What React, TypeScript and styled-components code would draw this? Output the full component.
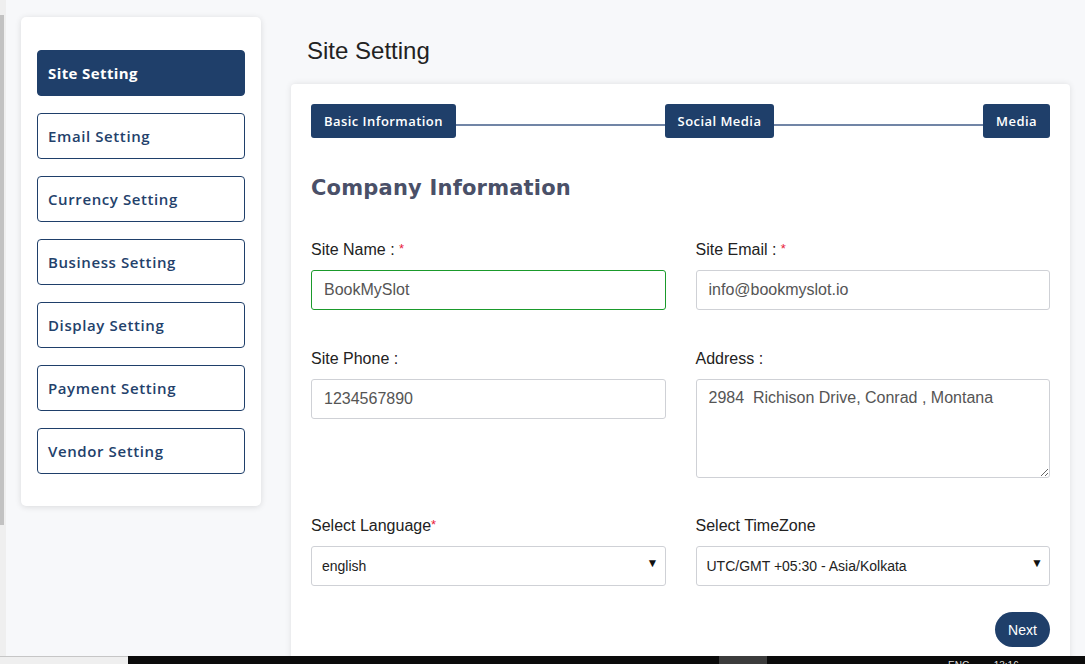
import React from "react";
import styled, { createGlobalStyle } from "styled-components";

const Global = createGlobalStyle`
  html, body { margin: 0; padding: 0; background: #f7f8fa; }
  body { font-family: "Liberation Sans", Arial, sans-serif; }
  * { box-sizing: border-box; }
`;

const NAVY = "#1f3f6a";

const Screen = styled.div`
  width: 1085px;
  height: 664px;
  display: flex;
  flex-direction: column;
  overflow: hidden;
`;

const Body = styled.div`
  height: 656px;
  display: flex;
  overflow: hidden;
`;

const EdgeStrip = styled.div`
  width: 6px;
  flex: none;
  background: #efefef;
  padding-top: 15px;
  display: flex;
  flex-direction: column;
`;

const EdgeThumb = styled.div`
  width: 4px;
  height: 510px;
  background: #c2c2c2;
`;

const Page = styled.div`
  flex: 1;
  display: flex;
  align-items: flex-start;
  gap: 30px;
  padding: 17px 15px 0 15px;
  background: #f7f8fa;
`;

const SideCard = styled.nav`
  width: 240px;
  flex: none;
  background: #fff;
  border-radius: 5px;
  box-shadow: 0 1px 6px rgba(0, 0, 0, 0.12);
  padding: 33px 16px 32px 16px;
  display: flex;
  flex-direction: column;
  gap: 17px;
`;

const SideItem = styled.div<{ $active?: boolean }>`
  height: 46px;
  border-radius: 4px;
  border: 1px solid ${NAVY};
  background: ${(p) => (p.$active ? NAVY : "#fff")};
  color: ${(p) => (p.$active ? "#fff" : "#23416b")};
  font-family: "Open Sans", sans-serif;
  font-weight: ${(p) => (p.$active ? 700 : 600)};
  font-size: 15px;
  letter-spacing: ${(p) => (p.$active ? "0.4px" : "0.6px")};
  display: flex;
  align-items: center;
  padding-left: 10px;
  padding-bottom: 1px;
`;

const Main = styled.main`
  flex: 1;
  display: flex;
  flex-direction: column;
`;

const Title = styled.h1`
  margin: 19px 0 0 16px;
  height: 48px;
  font-family: "Liberation Sans", Arial, sans-serif;
  font-weight: 400;
  font-size: 24px;
  line-height: 30px;
  color: #222;
`;

const Card = styled.section`
  background: #fff;
  border-radius: 4px;
  box-shadow: 0 0 6px rgba(0, 0, 0, 0.1);
  padding: 20px 20px 30px 20px;
`;

const Stepper = styled.div`
  display: flex;
  align-items: center;
`;

const Step = styled.div`
  height: 34px;
  padding: 0 13px;
  background: ${NAVY};
  color: #fff;
  border-radius: 3px;
  display: flex;
  align-items: center;
  font-family: "Open Sans", sans-serif;
  font-weight: 600;
  font-size: 13px;
  letter-spacing: 0.45px;
  flex: none;
`;

const StepLine = styled.div`
  flex: 1;
  height: 2px;
  background: #7185a6;
  margin-top: 8px;
`;

const Heading = styled.h2`
  margin: 37px 0 38px 0;
  font-family: "DejaVu Sans", "Liberation Sans", sans-serif;
  font-weight: 700;
  font-size: 21px;
  line-height: 26px;
  letter-spacing: 0.2px;
  color: #4a5068;
`;

const FormGrid = styled.div`
  display: grid;
  grid-template-columns: 1fr 1fr;
  column-gap: 30px;
  row-gap: 37.5px;
  align-items: start;
`;

const Field = styled.div`
  display: flex;
  flex-direction: column;
`;

const Label = styled.label`
  height: 21px;
  font-size: 16px;
  line-height: 22px;
  color: #222;
  margin-bottom: 10px;
`;

const Req = styled.span`
  color: #e8203a;
  font-size: 13px;
  line-height: 0;
  vertical-align: 2px;
`;

const Input = styled.input<{ $valid?: boolean; $spell?: boolean }>`
  height: 40px;
  width: 100%;
  border: 1px solid ${(p) => (p.$valid ? "#1a9a2b" : "#cfd1d6")};
  border-radius: 3px;
  padding: 0 12px;
  font-family: "Liberation Sans", Arial, sans-serif;
  font-size: 16px;
  color: #555;
  outline: none;
  background: #fff;
  ${(p) =>
    p.$spell
      ? "text-decoration: underline wavy #e0101a; text-decoration-thickness: 1px; text-underline-offset: 4px;"
      : ""}
`;

const TextArea = styled.textarea`
  height: 99px;
  width: 100%;
  border: 1px solid #cfd1d6;
  border-radius: 3px;
  padding: 8px 12px;
  font-family: "Liberation Sans", Arial, sans-serif;
  font-size: 16px;
  line-height: 20px;
  color: #555;
  outline: none;
`;

const SelectWrap = styled.div`
  position: relative;
`;

const Select = styled.select`
  appearance: none;
  height: 40px;
  width: 100%;
  border: 1px solid #cfd1d6;
  border-radius: 3px;
  padding: 0 10px;
  font-family: "Liberation Sans", Arial, sans-serif;
  font-size: 14px;
  color: #222;
  background: #fff;
  outline: none;
`;

const Caret = styled.span`
  position: absolute;
  right: 7px;
  top: 10px;
  font-size: 12px;
  line-height: 14px;
  color: #111;
  pointer-events: none;
`;

const Actions = styled.div`
  display: flex;
  justify-content: flex-end;
  margin-top: 26px;
`;

const NextButton = styled.button`
  width: 55px;
  height: 35px;
  border: none;
  border-radius: 18px;
  background: ${NAVY};
  color: #fff;
  font-family: "Liberation Sans", Arial, sans-serif;
  font-size: 14px;
  padding: 0;
`;

const TaskBar = styled.div`
  height: 8px;
  display: flex;
  overflow: hidden;
`;

const TaskLeft = styled.div`
  width: 128px;
  background: #efefef;
  border-top: 1px solid #c6c6c6;
`;

const TaskDark = styled.div`
  flex: 1;
  background: #0b0b0b;
  display: flex;
  align-items: flex-start;
`;

const TaskBlock = styled.div<{ $w: number; $ml: number }>`
  width: ${(p) => p.$w}px;
  margin-left: ${(p) => p.$ml}px;
  height: 8px;
  background: #3c3c3c;
`;

const TrayText = styled.span<{ $ml: number }>`
  margin-left: ${(p) => p.$ml}px;
  color: #ddd;
  font-family: "Liberation Sans", Arial, sans-serif;
  font-size: 10px;
  line-height: 10px;
  padding-top: 5px;
  white-space: nowrap;
`;

const menu = [
  "Site Setting",
  "Email Setting",
  "Currency Setting",
  "Business Setting",
  "Display Setting",
  "Payment Setting",
  "Vendor Setting",
];

export default function App() {
  return (
    <Screen>
      <Global />
      <Body>
        <EdgeStrip>
          <EdgeThumb />
        </EdgeStrip>
        <Page>
          <SideCard>
            {menu.map((m, i) => (
              <SideItem key={m} $active={i === 0}>
                {m}
              </SideItem>
            ))}
          </SideCard>
          <Main>
            <Title>Site Setting</Title>
            <Card>
              <Stepper>
                <Step>Basic Information</Step>
                <StepLine />
                <Step>Social Media</Step>
                <StepLine />
                <Step>Media</Step>
              </Stepper>
              <Heading>Company Information</Heading>
              <FormGrid>
                <Field>
                  <Label>
                    Site Name : <Req>*</Req>
                  </Label>
                  <Input $valid $spell defaultValue="BookMySlot" spellCheck={false} />
                </Field>
                <Field>
                  <Label>
                    Site Email : <Req>*</Req>
                  </Label>
                  <Input defaultValue="info@bookmyslot.io" />
                </Field>
                <Field>
                  <Label>Site Phone :</Label>
                  <Input defaultValue="1234567890" />
                </Field>
                <Field>
                  <Label>Address :</Label>
                  <TextArea defaultValue="2984  Richison Drive, Conrad , Montana" />
                </Field>
                <Field>
                  <Label>
                    Select Language<Req>*</Req>
                  </Label>
                  <SelectWrap>
                    <Select defaultValue="english">
                      <option value="english">english</option>
                    </Select>
                    <Caret>▼</Caret>
                  </SelectWrap>
                </Field>
                <Field>
                  <Label>Select TimeZone</Label>
                  <SelectWrap>
                    <Select defaultValue="kol">
                      <option value="kol">UTC/GMT +05:30 - Asia/Kolkata</option>
                    </Select>
                    <Caret>▼</Caret>
                  </SelectWrap>
                </Field>
              </FormGrid>
              <Actions>
                <NextButton>Next</NextButton>
              </Actions>
            </Card>
          </Main>
        </Page>
      </Body>
      <TaskBar>
        <TaskLeft />
        <TaskDark>
          <TaskBlock $w={48} $ml={591} />
          <TrayText $ml={181}>ENG</TrayText>
          <TrayText $ml={24}>13:16</TrayText>
        </TaskDark>
      </TaskBar>
    </Screen>
  );
}
